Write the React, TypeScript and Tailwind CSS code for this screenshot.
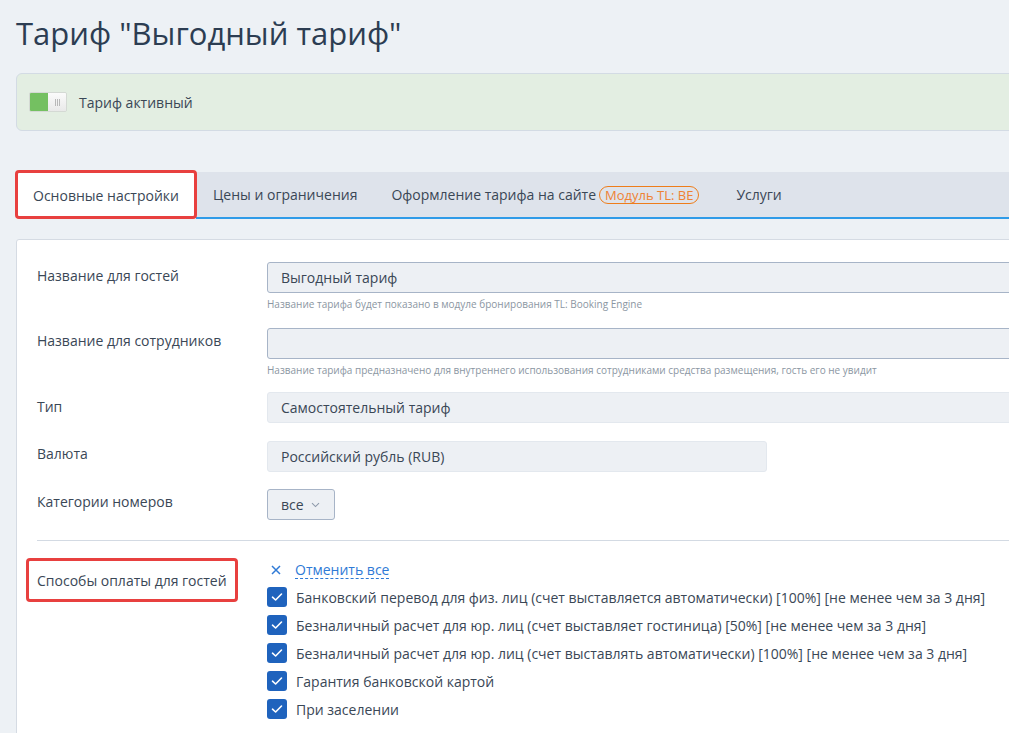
import React from "react";

const font = { fontFamily: '"Open Sans", "Noto Sans", sans-serif' };

function Check() {
  return (
    <span className="flex h-[20px] w-[20px] shrink-0 items-center justify-center rounded-[3px] bg-[#1f63bd]">
      <svg width="12" height="10" viewBox="0 0 12 10" fill="none">
        <path d="M1.5 5.2 L4.6 8 L10.5 2" stroke="white" strokeWidth="1.6" strokeLinecap="round" strokeLinejoin="round" />
      </svg>
    </span>
  );
}

const payments = [
  "Банковский перевод для физ. лиц (счет выставляется автоматически) [100%] [не менее чем за 3 дня]",
  "Безналичный расчет для юр. лиц (счет выставляет гостиница) [50%] [не менее чем за 3 дня]",
  "Безналичный расчет для юр. лиц (счет выставлять автоматически) [100%] [не менее чем за 3 дня]",
  "Гарантия банковской картой",
  "При заселении",
];

export default function App() {
  return (
    <div style={font} className="h-[733px] w-[1009px] overflow-hidden bg-[#edf1f5] pl-[16px] text-[14px] text-[#3a4756]">
      <div className="w-[1100px]">
        <h1 className="pt-[13px] text-[31px] leading-[40px] font-normal text-[#2c3d52]">Тариф "Выгодный тариф"</h1>

        <div className="mt-[20px] flex h-[58px] items-center rounded-[6px] border border-[#d3dbe4] bg-[#e3eee2] pl-[12px]">
          <div className="flex h-[20px] w-[38px] overflow-hidden rounded-[2px] border border-[#d4d9d4]">
            <div className="w-[19px] bg-[#74c061]"></div>
            <div className="flex w-[19px] items-center justify-center bg-gradient-to-b from-[#fbfbfb] to-[#e9e9e9]">
              <div className="flex gap-[1px]">
                <span className="h-[7px] w-px bg-[#b8b8b8]"></span>
                <span className="h-[7px] w-px bg-[#b8b8b8]"></span>
                <span className="h-[7px] w-px bg-[#b8b8b8]"></span>
              </div>
            </div>
          </div>
          <span className="ml-[12px]">Тариф активный</span>
        </div>

        <div className="mt-[41px] flex h-[47px] items-stretch bg-[#dee3eb]">
          <div className="relative flex items-center bg-white px-[17px]">
            <span>Основные настройки</span>
            <div className="absolute left-[-1px] right-[-1px] top-[-2px] bottom-[0px] rounded-[4px] border-[3px] border-[#e8403f]"></div>
          </div>
          <div className="flex flex-1 items-center border-b-2 border-[#2f9be8]">
            <span className="px-[17px]">Цены и ограничения</span>
            <span className="pl-[17px]">Оформление тарифа на сайте</span>
            <span className="ml-[3px] rounded-full border border-[#ee7d1b] px-[5px] text-[13px] leading-[16px] text-[#ee8234]">Модуль TL: BE</span>
            <span className="ml-[37px]">Услуги</span>
          </div>
        </div>

        <div className="mt-[20px] rounded-t-[3px] border border-[#d5dbe3] bg-white pl-[20px] pt-[22px]">
          <div className="flex">
            <div className="w-[230px] pt-[3px]">Название для гостей</div>
            <div>
              <div className="flex h-[31px] w-[800px] items-center rounded-[3px] border border-[#a7b4c7] bg-[#edf0f4] pl-[13px]">Выгодный тариф</div>
              <div className="mt-[3px] text-[10px] leading-[16px] text-[#8b96a2]">Название тарифа будет показано в модуле бронирования TL: Booking Engine</div>
            </div>
          </div>
          <div className="mt-[16px] flex">
            <div className="w-[230px] pt-[2px]">Название для сотрудников</div>
            <div>
              <div className="h-[31px] w-[800px] rounded-[3px] border border-[#a7b4c7] bg-[#edf0f4]"></div>
              <div className="mt-[3px] text-[10px] leading-[16px] text-[#8b96a2]">Название тарифа предназначено для внутреннего использования сотрудниками средства размещения, гость его не увидит</div>
            </div>
          </div>
          <div className="mt-[14px] flex">
            <div className="w-[230px] pt-[4px]">Тип</div>
            <div className="flex h-[31px] w-[800px] items-center rounded-[3px] border border-[#e3e8ee] bg-[#edf0f4] pl-[13px]">Самостоятельный тариф</div>
          </div>
          <div className="mt-[18px] flex">
            <div className="w-[230px] pt-[2px]">Валюта</div>
            <div className="flex h-[31px] w-[500px] items-center rounded-[3px] border border-[#e3e8ee] bg-[#edf0f4] pl-[13px]">Российский рубль (RUB)</div>
          </div>
          <div className="mt-[17px] flex">
            <div className="w-[230px] pt-[2px]">Категории номеров</div>
            <div className="flex h-[31px] w-[68px] items-center rounded-[3px] border border-[#a7b4c7] bg-[#edf0f4] pl-[13px]">
              <span>все</span>
              <svg className="ml-[7px]" width="9" height="6" viewBox="0 0 9 6" fill="none">
                <path d="M1 1.2 L4.5 4.6 L8 1.2" stroke="#8e9aab" strokeWidth="1.1" />
              </svg>
            </div>
          </div>

          <div className="mt-[20px] h-px bg-[#d3dae3]"></div>

          <div className="mt-[17px] flex">
            <div className="w-[230px]">
              <div className="ml-[-11px] inline-flex h-[44px] items-center rounded-[4px] border-[3px] border-[#e8403f] px-[8px]">Способы оплаты для гостей</div>
            </div>
            <div className="flex flex-col">
              <div className="flex h-[24px] items-center">
                <svg className="ml-[4px]" width="10" height="10" viewBox="0 0 10 10">
                  <path d="M1 1 L9 9 M9 1 L1 9" stroke="#2f7ad6" strokeWidth="1.5" />
                </svg>
                <span className="ml-[14px] border-b border-dashed border-[#2f7ad6] leading-[17px] text-[#2f7ad6]">Отменить все</span>
              </div>
              <div className="mt-[5px] flex flex-col gap-[8px]">
                {payments.map((p) => (
                  <div key={p} className="flex h-[20px] items-center">
                    <Check />
                    <span className="ml-[9px] whitespace-nowrap">{p}</span>
                  </div>
                ))}
              </div>
            </div>
          </div>
          <div className="h-[40px]"></div>
        </div>
      </div>
    </div>
  );
}
